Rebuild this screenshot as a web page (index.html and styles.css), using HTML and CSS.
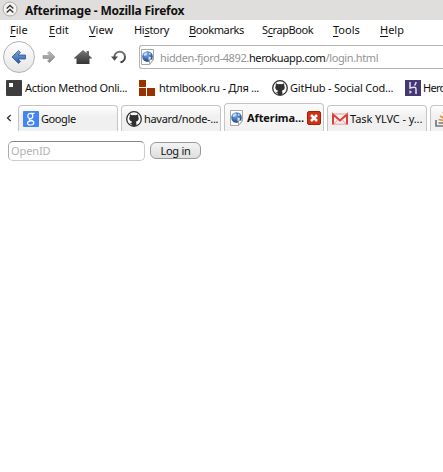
FILE: index.html
```
<!DOCTYPE html>
<html lang="en">
<head>
<meta charset="utf-8">
<title>Afterimage</title>
<link rel="stylesheet" href="styles.css">
</head>
<body>
<svg class="defs" width="0" height="0">
  <defs>
    <linearGradient id="blue" x1="0" y1="0" x2="0" y2="1"><stop offset="0" stop-color="#7fa6da"/><stop offset="1" stop-color="#2c5ba5"/></linearGradient>
    <linearGradient id="gray" x1="0" y1="0" x2="0" y2="1"><stop offset="0" stop-color="#c2c2c2"/><stop offset="1" stop-color="#868686"/></linearGradient>
    <linearGradient id="dark" x1="0" y1="0" x2="0" y2="1"><stop offset="0" stop-color="#777"/><stop offset="1" stop-color="#343434"/></linearGradient>
    <radialGradient id="globe" cx=".4" cy=".3" r=".75"><stop offset="0" stop-color="#7eb0ea"/><stop offset="1" stop-color="#123c84"/></radialGradient>
    <symbol id="page" viewBox="0 0 16 16">
      <path d="M1.5 .5h12v10l-4 5h-8z" fill="#fff" stroke="#a8a8a8"/>
      <circle cx="7.5" cy="7.5" r="5.3" fill="url(#globe)"/>
      <path d="M3.500 5.500 5.500 3.500l2 .5-1 2-2 1zM9 3.500l2 1.500-1 1-1-.8zM8.500 7.500l2.500.5-.5 2.500-2 1z" fill="#c9e0f8"/>
      <path d="M9.500 15.500v-5h4z" fill="#fff" stroke="#999" stroke-width=".8"/>
    </symbol>
    <symbol id="github" viewBox="0 0 16 16">
      <circle cx="8" cy="8" r="7.3" fill="#fff" stroke="#303030" stroke-width="1.3"/>
      <path d="M4 3.3 6.1 4.3Q8 3.8 9.9 4.3L12 3.3Q12.5 4.2 12.2 5.4 13.2 7 12.5 8.8 11.8 10.4 9.9 10.7 10.5 11.2 10.5 14.5 8 15.5 5.5 14.5V12.8Q4 13.2 3.2 11.4 4.6 12.5 5.5 11.7 5.6 11.1 6.1 10.7 4.2 10.4 3.5 8.8 2.8 7 3.8 5.4 3.5 4.2 4 3.3z" fill="#303030"/>
    </symbol>
  </defs>
</svg>
<header class="titlebar">
  <svg class="shade" viewBox="0 0 16 16"><circle cx="8" cy="8" r="7" fill="#f3f3f2" stroke="#aaa9a7"/><path d="m4.7 7.5 3.3-3 3.3 3m-6.6 4 3.3-3 3.3 3" fill="none" stroke="#333" stroke-width="1.3"/></svg>
  <span class="title">Afterimage - Mozilla Firefox</span>
</header>
<nav class="menu">
  <span class="m-file"><u>F</u>ile</span><span class="m-edit"><u>E</u>dit</span><span class="m-view"><u>V</u>iew</span><span class="m-history">Hi<u>s</u>tory</span><span class="m-bookmarks"><u>B</u>ookmarks</span><span class="m-scrap">S<u>c</u>rapBook</span><span class="m-tools"><u>T</u>ools</span><span class="m-help"><u>H</u>elp</span>
</nav>
<div class="toolbar">
  <button class="back"><svg width="16" height="16" viewBox="0 0 16 16"><path d="m1 8 6.500-6.500 2 2L7 6h7.500v4H7l2.500 2.500-2 2z" fill="url(#blue)" stroke="#2c568f" stroke-width=".8"/></svg></button>
  <svg class="forward" viewBox="0 0 14 14"><path d="m13 7-5.500 5.500L5.500 11 8 8.500H1v-3h7L5.500 3l2-1.500z" fill="url(#gray)" stroke="#8c8c8c" stroke-width=".6"/></svg>
  <svg class="home" viewBox="0 0 18 16"><path d="M0 9 9 1l3.500 3.100V2H15v4.300L18 9v.5h-2.500V15h-13V9.500H0z" fill="url(#dark)"/></svg>
  <svg class="reload" viewBox="0 0 16 16"><path d="M3.400 8.500A5.300 5.300 0 1 1 9.500 13.300" fill="none" stroke="url(#dark)" stroke-width="2"/><path d="M0 7.500h7L3.500 11.700z" fill="#4c4c4c"/></svg>
  <div class="address">
    <span class="identity"><svg width="16" height="16"><use href="#page"/></svg></span>
    <span class="url"><span class="sub">hidden-fjord-4892.</span><span class="domain">herokuapp.com</span><span class="path">/login.html</span></span>
  </div>
</div>
<div class="bookmarks">
  <div class="bm bm-action"><svg width="16" height="16"><rect width="16" height="16" rx="1" fill="#3d3d3d"/><path d="M3 3h4v4H3z" fill="#fff"/></svg><span>Action Method Onli...</span></div>
  <div class="bm bm-html"><svg width="16" height="16"><path d="M0 0h7v7H0zM0 8h7v8H0zM8 8h8v8H8z" fill="#993200"/></svg><span>htmlbook.ru - Для ...</span></div>
  <div class="bm bm-git"><svg width="16" height="16"><use href="#github"/></svg><span>GitHub - Social Cod...</span></div>
  <div class="bm bm-heroku"><svg width="16" height="16"><path d="M0 0h16v16H0z" fill="#453873"/><path d="M5 2v6q6-2 6 1v5M11 2q0 2-1.500 3.500" fill="none" stroke="#e3dff0" stroke-width="1.500"/><path d="m4.500 10 2.500 2-2.500 2z" fill="#e3dff0"/></svg><span>Hero</span></div>
</div>
<div class="tabs">
  <svg class="scroll" viewBox="0 0 6 8"><path d="M4.700 1 1.500 4l3.200 3" fill="none" stroke="#333" stroke-width="1.300"/></svg>
  <div class="tab t-google"><svg width="16" height="16"><rect width="16" height="16" rx="1" fill="#4285f4"/><g fill="none" stroke="#fff" stroke-width="1.200"><ellipse cx="7.300" cy="4.900" rx="2.500" ry="2.600"/><path d="M8 2.300h3.500M7 7.500q-1.500 1.200.5 1.700Q11 10 10.800 12 10.500 14 7.500 14T4.600 12Q4.600 10 8 9.800"/></g></svg><span>Google</span></div>
  <div class="tab t-havard"><svg width="16" height="16"><use href="#github"/></svg><span>havard/node-...</span></div>
  <div class="tab active"><svg width="16" height="16"><use href="#page"/></svg><span>Afterima...</span><svg class="close" width="14" height="14"><rect x=".5" y=".5" width="13" height="13" rx="1.500" fill="#ce3214" stroke="#a32009"/><path d="m4 4 6 6m0-6-6 6" stroke="#fff" stroke-width="2.500"/></svg></div>
  <div class="tab t-task"><svg width="16" height="16"><path d="M0 2.500h16v11H0z" fill="#f4eeee"/><path d="M1 13.500V3.500L8 9.500l7-6v10" fill="none" stroke="#db3d3b" stroke-width="2"/><path d="M0 3h16M0 13.200h16M2 13l4-4.500m8 4.500-4-4.500" stroke="#e28b89" stroke-width=".8"/></svg><span>Task YLVC - y...</span></div>
  <div class="tab t-stack"><svg width="16" height="16"><path d="M1 9v6h12V9" fill="none" stroke="#777" stroke-width="1.700"/><path d="M3.500 12h7" stroke="#777" stroke-width="1.600"/><path d="m3.500 8.500 7 1.300M5 5l6 3.500M8 1l4 6" stroke="#e19a3c" stroke-width="1.700"/></svg></div>
</div>
<main class="login">
  <input class="openid" type="text" placeholder="OpenID">
  <button class="submit"><span>Log in</span></button>
</main>
</body>
</html>
```

FILE: styles.css
```
* { box-sizing: border-box; }
body { margin: 0; width: 443px; height: 472px; overflow: hidden; background: #fff; color: #111; font: 11px/16px "Noto Sans", "Open Sans", sans-serif; white-space: nowrap; }
svg { display: block; flex: none; }
.defs { position: absolute; }
.titlebar { display: flex; height: 20px; padding: 1px 0 0 2px; background: #dfdedc; }
.shade { width: 16px; height: 16px; }
.title { margin-left: 7px; font-size: 12px; line-height: 19px; font-weight: 700; letter-spacing: -.2px; }
.menu { display: flex; height: 20px; padding: 2px 0 0 10px; }
.menu span { flex: none; }
.menu u { text-underline-offset: 2px; text-decoration-thickness: 1px; }
.m-file { width: 39px; }
.m-edit { width: 40px; }
.m-view { width: 45px; }
.m-history { width: 55px; letter-spacing: -.3px; }
.m-bookmarks { width: 73px; letter-spacing: -.75px; }
.m-bookmarks, .m-scrap { letter-spacing: -.4px; }
.m-scrap { width: 71px; }
.m-tools { width: 47px; }
.toolbar { display: flex; align-items: center; height: 34px; padding-left: 3px; }
.back { display: flex; flex: none; align-items: center; justify-content: center; width: 32px; height: 32px; padding: 0; border: 1px solid #b3b3b3; border-radius: 50%; background: linear-gradient(#fff, #e5e5e5); }
.forward { width: 14px; height: 14px; margin-left: 7px; }
.home { width: 18px; height: 16px; margin-left: 18px; }
.reload { width: 16px; height: 16px; margin-left: 19px; }
.address { display: flex; flex: 1; height: 24px; margin-left: 12px; border: 1px solid #b5b5b5; border-right: 0; border-radius: 3px 0 0 3px; }
.identity { display: flex; align-items: center; width: 16px; }
.url { display: flex; margin-left: 4px; line-height: 23px; letter-spacing: -.38px; }
.sub, .path { color: #949494; }
.bookmarks { display: flex; height: 30px; padding: 6px 0 0 6px; overflow: hidden; }
.bm { display: flex; flex: none; gap: 3px; letter-spacing: -.3px; }
.bm-action { width: 133px; }
.bm-html { width: 133px; gap: 4px; }
.bm-git { width: 133px; gap: 2px; letter-spacing: -.2px; }
.bm-heroku { width: 38px; gap: 2px; letter-spacing: -.7px; }
.tabs { display: flex; align-items: flex-end; height: 27px; gap: 3px; }
.scroll { width: 6px; height: 8px; margin: 0 3px 9px 6px; }
.tab { display: flex; flex: none; align-items: center; width: 100px; height: 26px; padding: 1px 0 0 4px; gap: 2px; border: 1px solid #c5c5c5; border-bottom: 0; border-radius: 4px 4px 0 0; background: linear-gradient(#fff, #f0f0f0 40%); letter-spacing: -.1px; }
.t-google { letter-spacing: -.4px; }
.t-havard { letter-spacing: -.3px; }
.tab.active { height: 28px; padding: 0 0 0 4px; background: linear-gradient(#fafafa, #f2f2f2); font-weight: 700; }
.t-stack { width: 13px; overflow: hidden; border-right: 0; border-top-right-radius: 0; }
.close { margin-left: auto; margin-right: 2px; }
.login { display: flex; padding: 10px 0 0 8px; gap: 5px; }
.openid { width: 137px; height: 20px; padding: 0 2px 2px; border: 1px solid #ccc; border-top-color: #888; border-left-color: #aaa; border-radius: 5px; background: #fff; font: inherit; letter-spacing: -.1px; }
.openid::placeholder { color: #b3b3b3; opacity: 1; }
.submit { display: flex; align-items: center; justify-content: center; width: 51px; height: 17px; margin-top: 1px; padding: 0; border: 1px solid #999; border-radius: 6px; background: linear-gradient(#f4f4f4, #dedede); color: #111; font: inherit; letter-spacing: -.3px; }
```
